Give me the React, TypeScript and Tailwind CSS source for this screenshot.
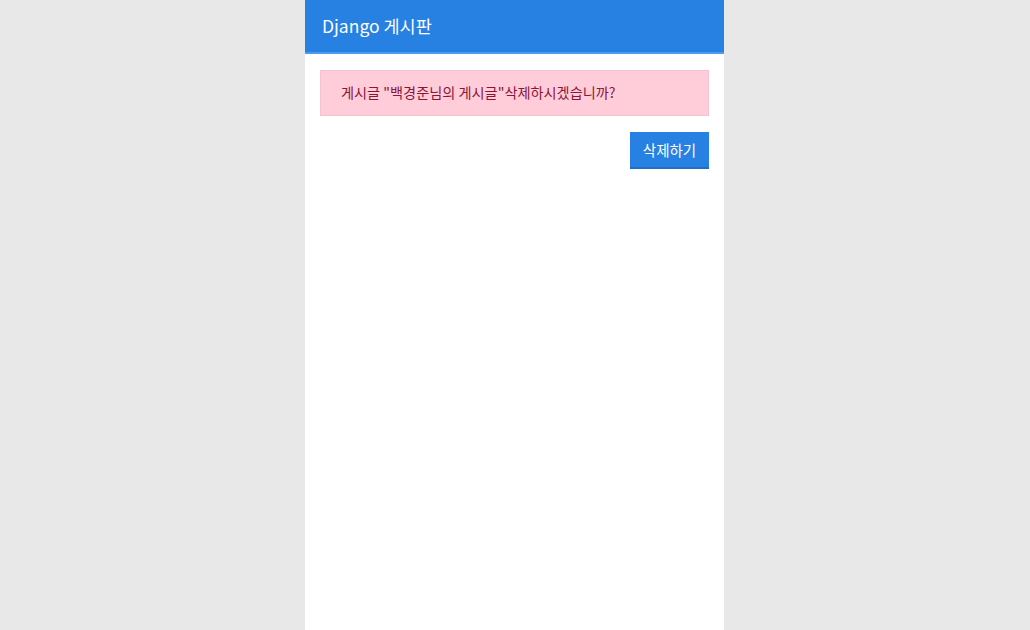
export default function App() {
  return (
    <main className="min-h-screen bg-[#e8e8e8] flex justify-center pr-px" style={{ fontFamily: '"Noto Sans CJK KR", "Noto Sans", sans-serif' }}>
      <div className="w-[419px] min-h-[630px] bg-white">
        <header className="h-[54px] bg-[#2681e3] border-b-2 border-[#4d9bef] flex items-center px-[17px]">
          <h1 className="text-[17.5px] text-white font-normal">Django 게시판</h1>
        </header>
        <section className="px-[15px] pt-[16px]">
          <div className="h-[46px] bg-[#ffccd9] border border-[#f5c2cf] flex items-center px-[20px] text-[14.2px] text-[#8a1538]">
            게시글 "백경준님의 게시글"삭제하시겠습니까?
          </div>
          <div className="flex justify-end mt-[16px]">
            <button className="w-[79px] h-[37px] bg-[#2681e3] text-white text-[14.5px] border-b-2 border-[#1f6fc7]">
              삭제하기
            </button>
          </div>
        </section>
      </div>
    </main>
  )
}
